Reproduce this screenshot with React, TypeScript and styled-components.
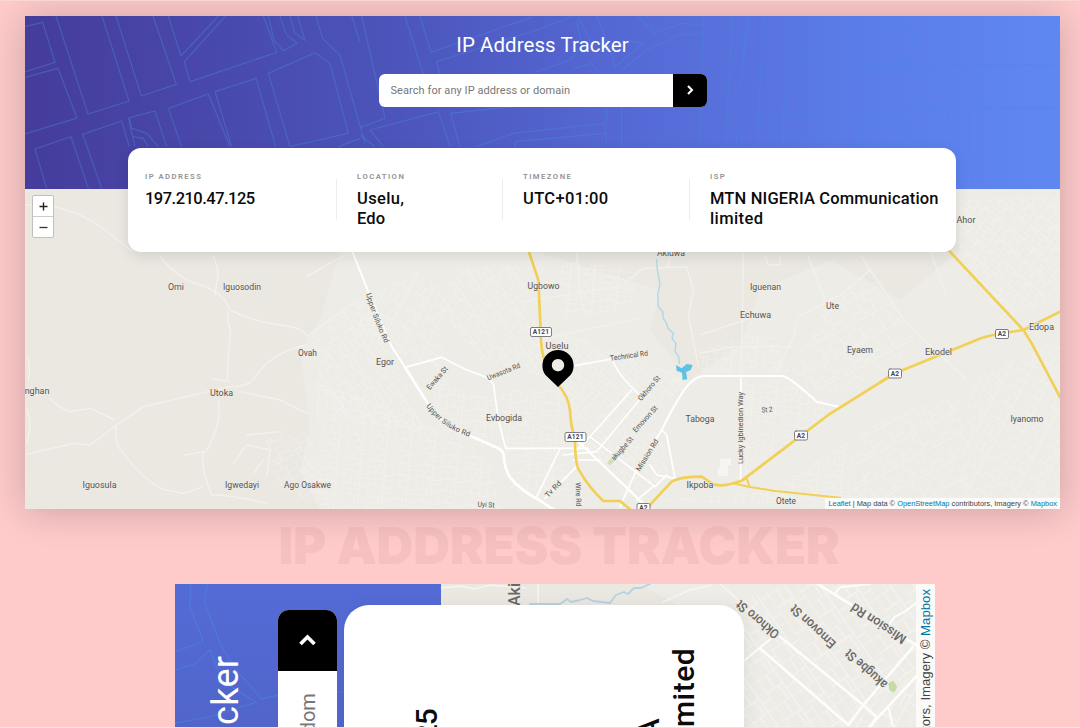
import React from 'react';
import styled, { createGlobalStyle } from 'styled-components';

const GlobalStyle = createGlobalStyle`
  * { box-sizing: border-box; }
  body { margin: 0; background: #fecaca; font-family: Roboto, "Open Sans", sans-serif; }
`;

const Stage = styled.main`
  width: 1080px;
  height: 728px;
  overflow: hidden;
  display: flex;
  flex-direction: column;
  background: #fecaca;
  border-top: 1px solid #fbd6d6;
  border-bottom: 1px solid #fbdcdf;
`;

const Desktop = styled.section`
  position: relative;
  flex: none;
  width: 1035px;
  height: 493px;
  margin: 15px 0 0 25px;
  display: flex;
  flex-direction: column;
  box-shadow: 0 2px 36px rgba(0, 0, 0, 0.2);
`;

const Hero = styled.header`
  position: relative;
  height: 173px;
  display: flex;
  flex-direction: column;
  align-items: center;
  background: linear-gradient(90deg, #453c9b 0%, #4c55bb 36%, #5569d5 58%, #5b7de9 82%, #5f87f2 100%);
`;

const Backdrop = styled.svg`
  position: absolute;
  inset: 0;
  width: 100%;
  height: 100%;
`;

const Title = styled.h1<{ $size: number; $line: number; $top: number; $track: number }>`
  position: relative;
  margin: ${p => p.$top}px 0 0;
  color: #fff;
  font-size: ${p => p.$size}px;
  line-height: ${p => p.$line}px;
  letter-spacing: ${p => p.$track}px;
  font-weight: 400;
  white-space: nowrap;
`;

const Search = styled.div<{ $w: number; $h: number; $top: number; $radius: number }>`
  position: relative;
  display: flex;
  width: ${p => p.$w}px;
  height: ${p => p.$h}px;
  margin-top: ${p => p.$top}px;
  border-radius: ${p => p.$radius}px;
  overflow: hidden;
  background: #fff;
`;

const Field = styled.div<{ $size: number; $pad: number; $track: number }>`
  flex: 1;
  min-width: 0;
  display: flex;
  align-items: center;
  margin: 0 ${p => p.$pad}px;
  overflow: hidden;
  white-space: nowrap;
  color: #777;
  font-size: ${p => p.$size}px;
  letter-spacing: ${p => p.$track}px;
`;

const Go = styled.button<{ $w: number }>`
  width: ${p => p.$w}px;
  padding: 0;
  border: 0;
  background: #000;
  display: flex;
  align-items: center;
  justify-content: center;
`;

const Card = styled.div`
  position: absolute;
  z-index: 2;
  left: 103px;
  top: 132px;
  width: 828px;
  height: 104px;
  padding: 23px 0 0 17px;
  display: grid;
  grid-template-columns: 192px 166px 187px 1fr;
  background: #fff;
  border-radius: 13px;
  box-shadow: 0 4px 14px rgba(0, 0, 0, 0.1);
`;

const Info = styled.div<{ $first?: boolean }>`
  position: relative;
  padding-left: ${p => (p.$first ? 0 : 20)}px;
  &::before {
    content: '';
    display: ${p => (p.$first ? 'none' : 'block')};
    position: absolute;
    left: -1px;
    top: 8px;
    width: 1px;
    height: 41px;
    background: #ececec;
  }
`;

const Label = styled.div<{ $size: number; $line: number }>`
  font-size: ${p => p.$size}px;
  line-height: ${p => p.$line}px;
  font-weight: 600;
  letter-spacing: 0.19em;
  color: #939393;
`;

const Value = styled.div<{ $size: number; $line: number; $top: number }>`
  margin-top: ${p => p.$top}px;
  font-size: ${p => p.$size}px;
  line-height: ${p => p.$line}px;
  font-weight: 500;
  color: #0b0b0b;
  white-space: nowrap;
`;

const Line = styled.div<{ $track: number }>`
  letter-spacing: ${p => p.$track}px;
`;

const MapArea = styled.div`
  position: relative;
  flex: 1;
  overflow: hidden;
  background: #eae8e1;
`;

const ZoomControl = styled.div`
  position: absolute;
  left: 7px;
  top: 6px;
  width: 22px;
  height: 43px;
  display: flex;
  flex-direction: column;
  background: #fff;
  border: 1px solid #c2c0bb;
  border-radius: 2px;
`;

const ZoomKey = styled.div`
  flex: 1;
  display: flex;
  align-items: center;
  justify-content: center;
  & + & { border-top: 1px solid #ccc; }
`;

const Attribution = styled.div<{ $size: number; $h: number; $pad: number }>`
  position: absolute;
  right: 0;
  bottom: 0;
  height: ${p => p.$h}px;
  padding: 0 ${p => p.$pad}px;
  background: rgba(255, 255, 255, 0.75);
  font-family: "Liberation Sans", sans-serif;
  font-size: ${p => p.$size}px;
  line-height: ${p => p.$h}px;
  color: #444;
  white-space: nowrap;
  & span { color: #0078a8; }
`;

const Watermark = styled.h2`
  flex: none;
  margin: 10px 0 0;
  padding-left: 38px;
  height: 65px;
  text-align: center;
  font-family: Inter, sans-serif;
  font-weight: 900;
  font-size: 51px;
  line-height: 54px;
  letter-spacing: -0.25px;
  color: rgba(110, 20, 40, 0.055);
  white-space: nowrap;
`;

const PhoneWindow = styled.section`
  flex: none;
  width: 760px;
  height: 143px;
  margin-left: 175px;
  overflow: hidden;
`;

const Phone = styled.div`
  position: relative;
  width: 450px;
  height: 760px;
  display: flex;
  flex-direction: column;
  transform-origin: 0 0;
  transform: translateY(450px) rotate(-90deg);
`;

const PhoneHero = styled.header`
  position: relative;
  height: 266px;
  display: flex;
  flex-direction: column;
  align-items: center;
  background: linear-gradient(90deg, #4b50b5 0%, #5165cb 70%, #546bd6 100%);
`;

const PhoneCard = styled.div`
  position: absolute;
  z-index: 2;
  left: 21px;
  top: 169px;
  width: 408px;
  height: 400px;
  padding-top: 44px;
  display: flex;
  flex-direction: column;
  align-items: center;
  gap: 18px;
  text-align: center;
  background: #fff;
  border-radius: 25px;
  box-shadow: 0 4px 16px rgba(0, 0, 0, 0.06);
`;

const Chevron = ({ size }: { size: number }) => (
  <svg width={size} height={size} viewBox="0 0 12 12" fill="none" stroke="#fff" strokeWidth="2.1">
    <path d="M4 2l4 4-4 4" />
  </svg>
);

const Credit = () => (
  <>
    <span>Leaflet</span> | Map data © <span>OpenStreetMap</span> contributors, Imagery © <span>Mapbox</span>
  </>
);

const HeroStreets = () => (
  <Backdrop viewBox="25 16 1035 173" fill="none" stroke="#4a8ade" strokeWidth="3.6" strokeOpacity="0.4">
    <g transform="scale(.33333)">
      <path d="M75 80L128 67L165 187L75 216M75 232L174 205L231 354L75 402M168 48L264 342L387 303L306 48M348 48L424 288L529 253L459 48M505 48L543 168L655 48M676 48L553 185L570 245L830 157L790 48M805 48L822 120L850 152L892 130L860 105L840 48M870 48L885 100L915 120L893 48M948 48L968 115L1020 165L1095 430M1055 48L1080 125M870 440L805 220L945 158L990 190L1045 400L870 440M545 440L505 325L625 282L690 440M695 440L645 275L768 235L827 440M500 440L465 333L388 353L395 385L440 400L475 440M400 410L430 415L445 440M388 440L365 363L248 403L305 565M140 565L105 447L213 410L265 565M385 353L405 440M1015 440L1080 415" />
    </g>
    <g transform="translate(360 0) scale(.33333)">
      <path d="M5 48L75 355L0 382M135 48L190 222M180 48L213 157L520 50M240 222L230 185L530 90L640 48M70 440L30 390L235 335L270 440M300 440L272 340L500 315M0 405L45 440M655 48L690 125M710 48L745 135L765 200L850 130L800 120M530 215L630 180L665 140L650 60M640 205L695 190L715 215M835 48L880 100L965 70L1030 75M860 48L885 95M780 215L860 150L960 105L1025 100M1030 48L1020 440M350 440L460 400L735 370L740 430M465 440L465 425L735 400M785 320L785 440M740 320L740 368" />
    </g>
    <g transform="translate(720 0) scale(.33333)">
      <path d="M38 48L15 440M80 48L62 268M90 48L72 170M130 48L112 435M213 48L190 345V440M210 150L310 203L365 200V48M405 48L412 200L1020 195M488 73L585 95L570 190L535 178L525 188L470 178ZM190 345L685 330L692 440M1020 323H745L755 565M428 440L420 370L560 362L575 420H615V440M50 440L48 405L66 390V440" />
    </g>
  </Backdrop>
);

const grids: [string, number, number, number][] = [
  ['g1', 7, 9, 28], ['g2', 6, 10, -35], ['g3', 8, 6, 5], ['g4', 7, 11, 62], ['g5', 5, 8, -50],
];

const StreetPatterns = ({ prefix, k = 1 }: { prefix: string; k?: number }) => (
  <defs>
    {grids.map(([id, w, h, a]) => (
      <pattern key={id} id={prefix + id} width={w * k * 3} height={h * k * 2} patternUnits="userSpaceOnUse" patternTransform={`rotate(${a})`}>
        <path
          d={`M0 0H${w * 3 * k}M0 ${h * k}H${w * 2 * k}M0 0V${h * 2 * k}M${w * k} 0V${h * k}M${w * 2 * k} 0V${h * 2 * k}M${w * 1.5 * k} ${h * k}V${h * 2 * k}M${w * 2 * k} ${h * 1.4 * k}H${w * 3 * k}`}
          stroke="#f8f7f4" strokeWidth={0.8 * k} fill="none"
        />
      </pattern>
    ))}
  </defs>
);

const places: [string, number, number, number][] = [
  ['Omi', 176, 290, 16], ['Iguosodin', 242, 290, 38], ['Ovah', 307.5, 355.5, 19], ['Egor', 385, 365, 18],
  ['Utoka', 221.5, 396, 23], ['Iguosula', 99.5, 488, 34], ['Igwedayi', 242, 488, 34], ['Ago Osakwe', 307.5, 487.5, 47],
  ['Evbogida', 504, 421, 36], ['Ugbowo', 543.5, 289, 32], ['Uselu', 557, 349, 23], ['Akiuwa', 671, 255.5, 28],
  ['Taboga', 700, 422, 29], ['Ikpoba', 700, 488, 27], ['Iguenan', 765.5, 290, 31], ['Echuwa', 755.5, 318, 31],
  ['Ute', 832.5, 309, 13], ['Eyaem', 860, 353, 26], ['Otete', 786, 504, 20], ['Ahor', 966, 222.5, 19],
  ['Edopa', 1041.5, 330, 25], ['Ekodel', 938.5, 354.5, 27], ['Iyanomo', 1027, 422, 33],
];

const streets: [string, number, number, number, number][] = [
  ['Ewaka St', 437, 378, -49, 28], ['Uwasota Rd', 503.5, 371.5, -22, 35], ['Technical Rd', 629, 355.5, -8, 38],
  ['Okhoro St', 649, 388, -50, 30], ['Emovon St', 645, 419, -48, 33], ['akugbe St', 622, 448.5, -48, 29],
  ['Mission Rd', 647, 455, -58, 36], ['Tv Rd', 553, 489, -46, 20], ['Wire Rd', 578.5, 494.5, 88, 24],
  ['Uyi St', 486, 504.5, 3, 17], ['St 2', 767, 409.5, -3, 11], ['Lucky Igbinedion Way', 740.5, 428, -90, 72],
];

const shields: [string, number, number, number][] = [
  ['A121', 541, 332, 21], ['A121', 575.5, 437, 21], ['A2', 801, 435.5, 13], ['A2', 895, 373.5, 13],
  ['A2', 1002, 334, 13], ['A2', 643.5, 508, 13],
];

const CityMap = () => (
  <Backdrop viewBox="25 189 1035 320" fill="none" strokeLinejoin="round" strokeLinecap="round">
    <StreetPatterns prefix="d" />
    <g fill="#eeece7">
      <path d="M340 250L530 250L660 290L650 330L690 380L740 345L760 290L830 260L900 300L960 250L945 189H1060V509H320L300 470L310 430L300 350L320 320Z" />
    </g>
    <g opacity=".6">
      <path fill="url(#dg1)" d="M355 300L420 270L450 300L440 370L390 350L350 330ZM970 380L1060 340V509H960Z" />
      <path fill="url(#dg2)" d="M310 340L360 300L400 370L430 430L330 420ZM450 270L520 260L550 380L480 360L440 310Z" />
      <path fill="url(#dg3)" d="M315 380L440 430L490 460L500 509H320ZM560 260L640 270L630 310L560 320ZM700 350L770 330L790 372L700 372ZM740 380L790 380L830 410L745 480Z" />
      <path fill="url(#dg4)" d="M265 440L310 430L330 509L280 490ZM830 300L880 280L920 350L830 400L790 370ZM860 430L960 390L970 509H850Z" />
      <path fill="url(#dg5)" d="M560 330L640 360L690 380L600 470L570 420ZM960 200L1060 195V300L1000 320L960 250ZM610 440L660 430L670 480L620 500Z" />
      <path fill="url(#dg3)" d="M500 390L560 390L570 500L510 490ZM650 500L770 490L850 440L860 509ZM430 380L500 400L490 450L440 430Z" />
    </g>
    <g stroke="#f2f1ec" strokeWidth="1.2">
      <path d="M25 205Q70 203 105 230T130 250" />
      <g transform="translate(0 250) scale(.33333)" strokeWidth="4.2">
        <path d="M480 18Q530 85 600 105T690 180Q760 215 840 225T920 260M640 20Q660 60 650 100L645 135M685 185Q680 220 692 240Q685 300 682 390M915 285Q800 315 760 390Q740 410 690 410L430 470L350 525L270 585L220 580L80 613M635 385L690 395M655 450Q665 500 640 560T610 605Q600 650 635 735Q700 735 800 760M720 425L840 450L920 490M345 510L270 475L210 485Q170 470 150 445M350 525Q340 580 370 610Q430 690 490 718L550 730L610 710M555 615L610 605M80 320Q95 350 85 390M80 480Q100 520 80 580M920 80L1060 0M920 260L1075 150M740 555L840 545M700 640L740 585L810 600L800 680M760 670L790 630" />
      </g>
      <g transform="translate(520 240) scale(.33333)" strokeWidth="4">
        <path d="M0 185L300 140L370 85L500 80L520 150L505 230L520 300L535 380M50 300L360 235M170 40L185 200M440 80L450 60" />
      </g>
      <g transform="translate(700 240) scale(.33333)" strokeWidth="4">
        <path d="M130 40L125 400M195 50L205 75L240 75V45M325 50L375 180M485 50L510 90L430 160L295 230L280 290L230 390M510 90L620 250L800 420M0 285L150 235M680 0L740 170M0 340L100 320H280" />
      </g>
    </g>
    <path d="M720 459l11 -1v7h-3v11h-10v-8h2z" fill="#f6f5f2" />
    <g stroke="#fff">
      <g transform="translate(340 240) scale(.33333)">
        <path strokeWidth="6" d="M38 38L85 155L155 320L195 382" />
        <path strokeWidth="8" d="M195 382L262 488Q310 560 385 585L475 625Q490 632 492 650Q492 680 510 712Q540 750 600 782L650 815" />
        <path strokeWidth="5" d="M195 382L305 352L375 388L435 410L460 430L475 540L497 625H745" />
      </g>
      <g transform="translate(520 240) scale(.33333)" strokeWidth="5">
        <path d="M165 377L275 357Q295 400 315 420L355 462M335 450L210 590L405 740L440 705M358 480L230 635L130 645M160 660L240 660M120 627L50 770M170 680L75 775M425 570L440 585L465 715L410 705L390 675M210 590L160 640M300 800L345 700M400 740L350 780" />
        <path strokeWidth="7" d="M170 600L385 805" />
        <path strokeWidth="6" d="M345 700L425 570Q470 480 500 440Q525 410 550 408L790 408Q820 420 890 485L955 500" />
        <path d="M663 410L662 718" />
      </g>
    </g>
    <g stroke="#f1d055" strokeWidth="8">
      <g transform="translate(520 240) scale(.33333)">
        <path d="M25 30L55 120L62 275Q62 330 75 365L115 435Q145 470 150 510Q152 560 165 595Q165 680 180 695Q205 740 250 783H300L330 808M375 812L385 800L455 725Q480 710 545 710L580 733Q610 740 640 730L665 722L925 525L980 490L1105 412L1125 400" />
        <path strokeWidth="6" d="M640 730L685 740L760 752L960 773M665 722L680 715L688 738" />
      </g>
      <g transform="translate(880 180) scale(.33333)">
        <path d="M45 580L290 480Q320 465 430 450L540 395M205 210L430 450L455 490L542 655" />
      </g>
      <path d="M892 375L880 382.5" strokeWidth="2.7" />
    </g>
    <g transform="translate(520 240) scale(.33333)">
      <path stroke="#add6e8" strokeWidth="4" d="M410 60L412 90L420 130L413 165L415 200L428 215L430 235L440 250L444 265L460 280L456 295L468 310L465 335L476 350L478 370" />
      <path fill="#5cc3e6" d="M468 375L485 385L500 372L518 375L512 390L498 396L502 418L488 420L486 398L470 392Z" />
      <path fill="#cfe0b0" d="M262 668L275 654L283 664L270 676Z" />
    </g>
    <g fontFamily="Roboto, sans-serif" fill="#55534f" textAnchor="middle" stroke="#eeece7" strokeWidth="1.6" paintOrder="stroke">
      {places.map(([t, x, y, w]) => (
        <text key={t} x={x} y={y} fontSize="9" textLength={w} lengthAdjust="spacingAndGlyphs">{t}</text>
      ))}
      <text x="49.5" y="394" textAnchor="end" fontSize="9">nghan</text>
      <g fontSize="7.3">
        {streets.map(([t, x, y, a, w]) => (
          <text key={t} x={x} y={y + 2.6} textLength={w} lengthAdjust="spacingAndGlyphs" transform={`rotate(${a} ${x} ${y})`}>{t}</text>
        ))}
      </g>
    </g>
    <path id="siluko-north" d="M366 294Q374 322 388 350" />
    <path id="siluko-south" d="M426 406Q442 429 476 439" />
    <g fontFamily="Roboto, sans-serif" fontSize="7.3" fill="#55534f" stroke="#eeece7" strokeWidth="1.6" paintOrder="stroke">
      <text textLength="53" lengthAdjust="spacingAndGlyphs"><textPath href="#siluko-north">Upper Siluko Rd</textPath></text>
      <text textLength="54" lengthAdjust="spacingAndGlyphs"><textPath href="#siluko-south">Upper Siluko Rd</textPath></text>
    </g>
    {shields.map(([t, x, y, w]) => (
      <g key={`${x}`}>
        <rect x={x - w / 2} y={y - 4.5} width={w} height="9" rx="1.5" fill="#fff" stroke="#6f6f78" strokeWidth=".9" />
        <text x={x} y={y + 2.4} fontFamily="Roboto, sans-serif" fontWeight="700" fontSize="6.6" fill="#44434c" textAnchor="middle" letterSpacing=".2">{t}</text>
      </g>
    ))}
    <path fill="#000" fillRule="evenodd" d="M558 387L545.5 375A15.6 15.6 0 1 1 570.5 375ZM558 359a6.2 6.2 0 1 0 .01 0Z" />
  </Backdrop>
);

const phoneStreets: [string, number, number, number, number][] = [
  ['Okhoro St', 757.5, 619.5, 220, 52], ['Emovon St', 813, 626.5, 223, 57],
  ['akugbe St', 866, 669, 222, 52], ['Mission Rd', 878.5, 623.5, 213, 63],
];

const PhoneMap = () => (
  <Backdrop viewBox="0 266 450 494" fill="none" strokeLinejoin="round" strokeLinecap="round">
    <StreetPatterns prefix="m" k={1.6} />
    <g transform="matrix(0 1 -1 0 1034 -175)">
      <path fill="#eeece7" d="M640 584H935V728H740V640Z" />
      <path fill="url(#mg2)" opacity=".65" d="M740 600L790 584H935V650L850 728H740Z" />
      <path fill="url(#mg1)" opacity=".65" d="M850 728L935 650V728Z" />
      <g stroke="#f6f5f2" strokeWidth="1.6">
        <path d="M441 588L460 586L475 589L490 585L525 588M663 602L690 590L712 585M720 584L745 606M538 584V605" />
      </g>
      <path stroke="#b6d3e2" strokeWidth="1.8" d="M530 604L560 604L567 599L571 602L580 600L587 598L593 601L610 603L616 595L624 592L628 594L634 588L641 588L650 584" />
      <g transform="translate(720 570) scale(.33333)" stroke="#fdfdfc">
        <path strokeWidth="8" d="M290 40L600 232M180 200L430 405L470 440L450 474M120 235L385 465M588 320L445 474M580 230L430 405L385 465" />
        <path strokeWidth="6" d="M345 70L360 52L450 42M160 200L75 270M505 410L520 474M510 160L525 140L555 125L590 98" />
        <path fill="#c7dba2" stroke="none" d="M505 340L520 332L532 352L522 368L508 360Z" />
      </g>
      <g fontFamily="Roboto, sans-serif" fontSize="13" fontWeight="500" fill="#6a6864" stroke="#eeece7" strokeWidth="2" paintOrder="stroke" textAnchor="middle">
        {phoneStreets.map(([t, x, y, a, w]) => (
          <text key={t} x={x} y={y + 4.4} textLength={w} lengthAdjust="spacingAndGlyphs" transform={`rotate(${a} ${x} ${y})`}>{t}</text>
        ))}
        <text x="520" y="606" fontSize="16" textAnchor="start" transform="rotate(-90 520 606)">Akiuwa</text>
      </g>
    </g>
  </Backdrop>
);

const PhoneStreets = () => (
  <Backdrop viewBox="0 0 450 266" fill="none" stroke="#4a8ade" strokeOpacity=".45" strokeWidth="4.2">
    <g transform="matrix(0 1 -1 0 1034 -175) translate(160 510) scale(.33333)">
      <path d="M92 220L90 290L130 395L45 425M142 220L133 275L180 400L220 470L305 567L355 555M45 480L105 462L150 420L185 510L288 577L150 620L45 640M530 548L555 545" />
    </g>
  </Backdrop>
);

type TextLine = [text: string, track: number];

const details: { label: string; wide: TextLine[]; tall: TextLine[] }[] = [
  { label: 'IP ADDRESS', wide: [['197.210.47.125', -0.52]], tall: [['197.210.47.125', -0.9]] },
  { label: 'LOCATION', wide: [['Uselu,', 0.35], ['Edo', 0.1]], tall: [['Uselu, Edo', 0.4]] },
  { label: 'TIMEZONE', wide: [['UTC+01:00', 0.35]], tall: [['UTC+01:00', 0.4]] },
  { label: 'ISP', wide: [['MTN NIGERIA Communication', 0.17], ['limited', 0.4]], tall: [['MTN NIGERIA', -0.7], ['Communication limited', 0.45]] },
];

export default function App() {
  return (
    <Stage>
      <GlobalStyle />
      <Desktop>
        <Hero>
          <HeroStreets />
          <Title $size={20.5} $line={24} $top={17} $track={0.05}>IP Address Tracker</Title>
          <Search $w={328} $h={33} $top={16.5} $radius={6}>
            <Field $size={11} $pad={12} $track={0.07}>Search for any IP address or domain</Field>
            <Go $w={34} aria-label="Search"><Chevron size={12} /></Go>
          </Search>
        </Hero>
        <MapArea>
          <CityMap />
          <ZoomControl>
            <ZoomKey><svg width="9" height="9" stroke="#222" strokeWidth="1.4"><path d="M4.5 .5v8M.5 4.5h8" /></svg></ZoomKey>
            <ZoomKey><svg width="9" height="9" stroke="#333" strokeWidth="1.3"><path d="M.5 4.5h8" /></svg></ZoomKey>
          </ZoomControl>
          <Attribution $size={7.42} $h={11} $pad={3}><Credit /></Attribution>
        </MapArea>
        <Card>
          {details.map((d, i) => (
            <Info key={d.label} $first={i === 0}>
              <Label $size={7.7} $line={11}>{d.label}</Label>
              <Value $size={16.5} $line={19.5} $top={7}>
                {d.wide.map(([text, track]) => <Line key={text} $track={track}>{text}</Line>)}
              </Value>
            </Info>
          ))}
        </Card>
      </Desktop>
      <Watermark>IP ADDRESS TRACKER</Watermark>
      <PhoneWindow>
        <Phone>
          <PhoneHero>
            <PhoneStreets />
            <Title $size={36} $line={42} $top={30} $track={0.3}>IP Address Tracker</Title>
            <Search $w={398} $h={59} $top={31} $radius={11}>
              <Field $size={20} $pad={23} $track={-0.12}>Search for any IP address or dom</Field>
              <Go $w={61} aria-label="Search"><Chevron size={21} /></Go>
            </Search>
          </PhoneHero>
          <MapArea>
            <PhoneMap />
            <Attribution $size={13.2} $h={19} $pad={5}><Credit /></Attribution>
          </MapArea>
          <PhoneCard>
            {details.map(d => (
              <div key={d.label}>
                <Label $size={12} $line={14}>{d.label}</Label>
                <Value $size={30} $line={35} $top={7}>
                  {d.tall.map(([text, track]) => <Line key={text} $track={track}>{text}</Line>)}
                </Value>
              </div>
            ))}
          </PhoneCard>
        </Phone>
      </PhoneWindow>
    </Stage>
  );
}
